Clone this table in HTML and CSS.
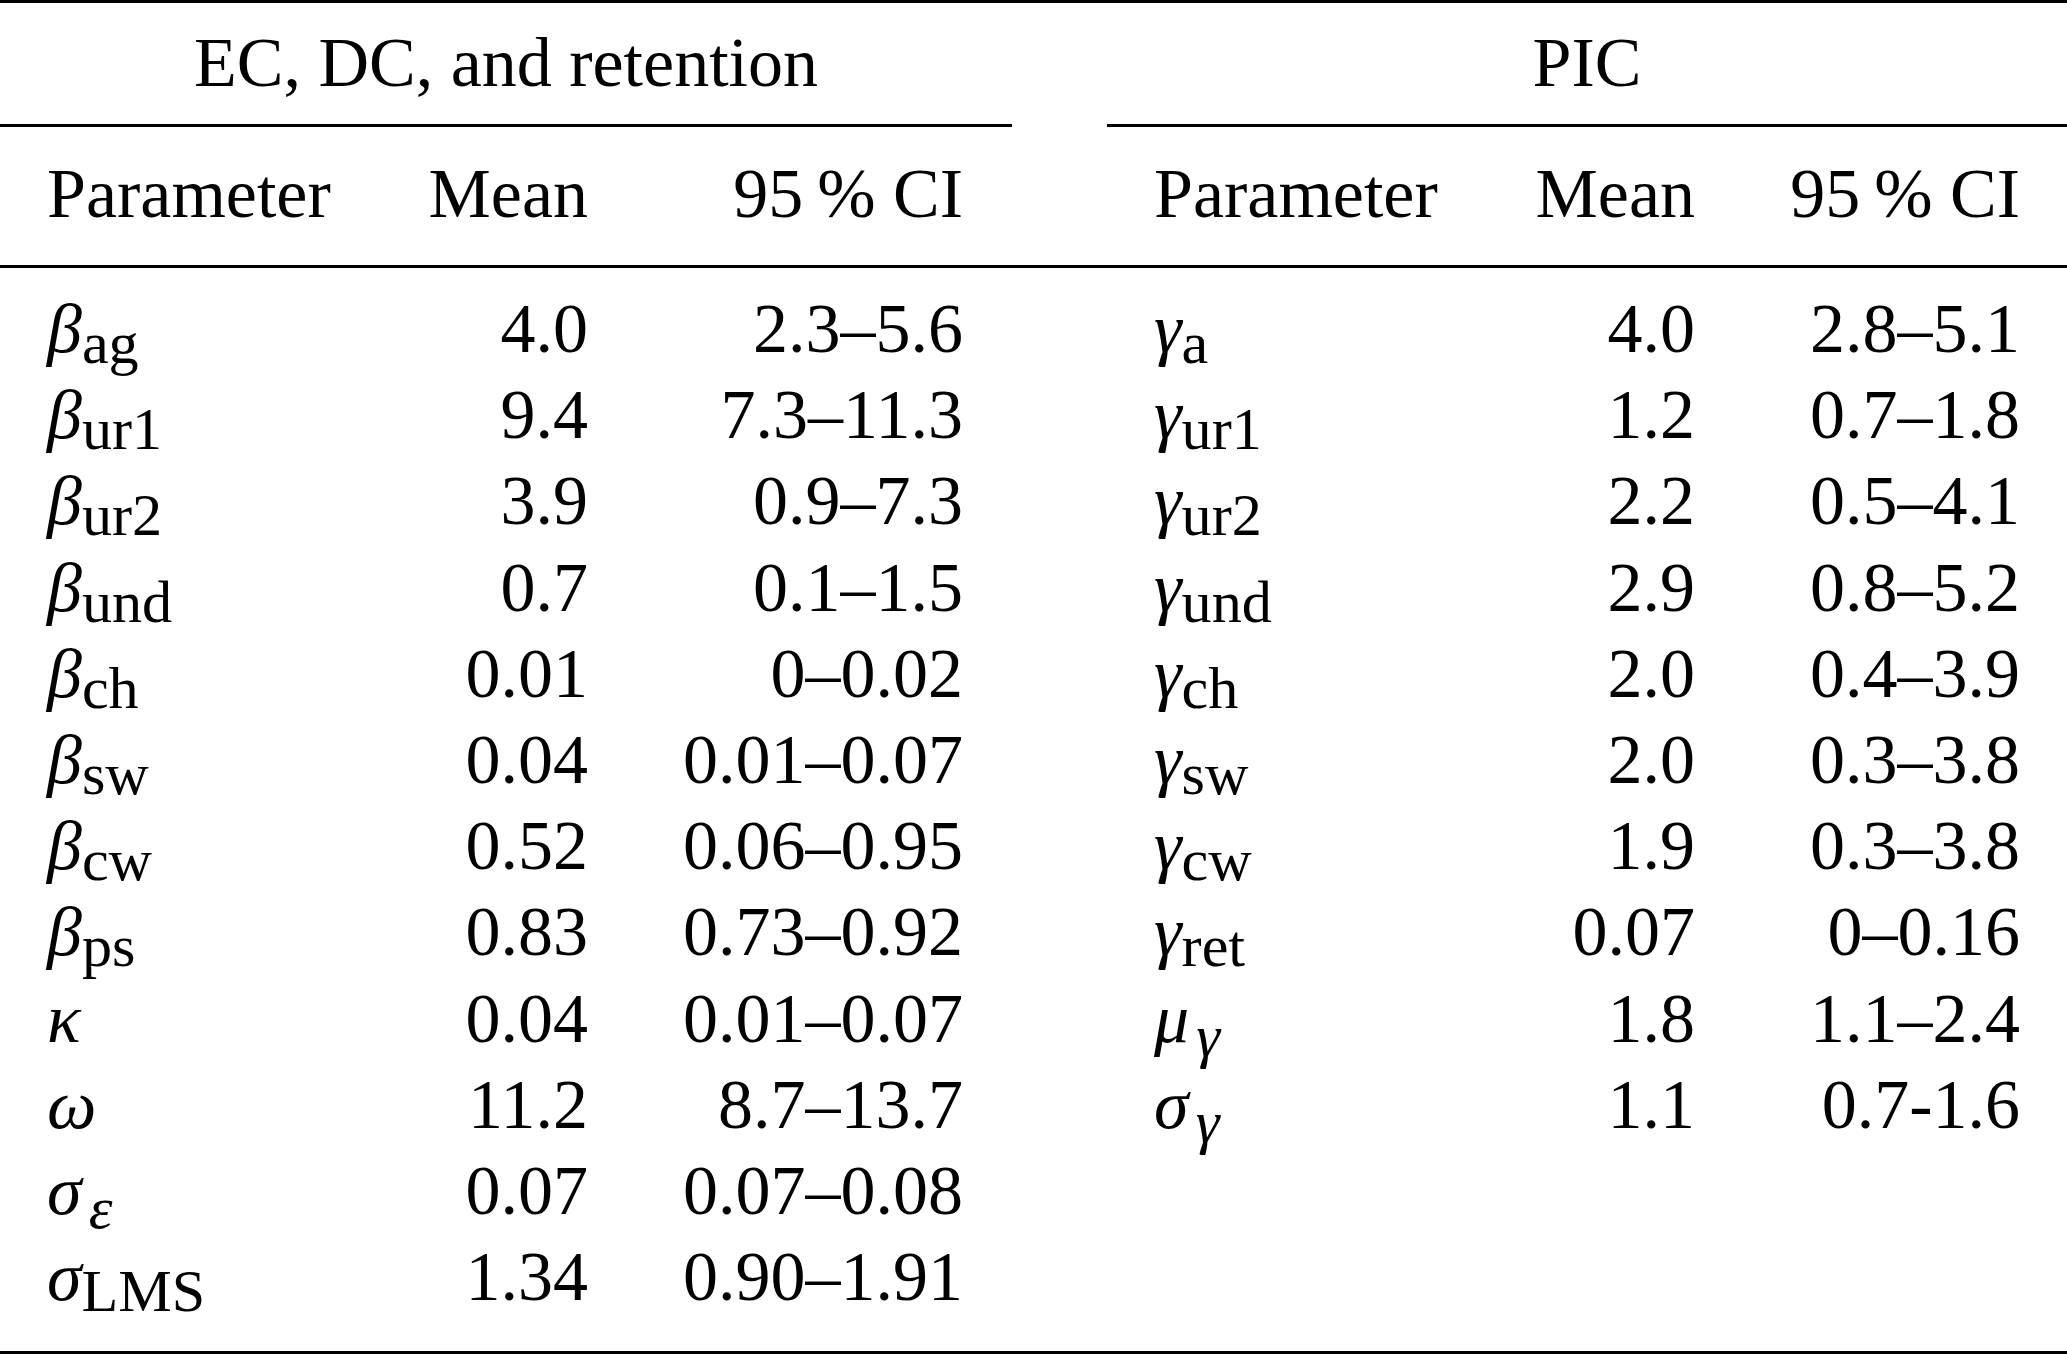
FILE: index.html
```html
<!DOCTYPE html>
<html lang="en">
<head>
<meta charset="utf-8">
<title>Parameter estimates</title>
<link rel="stylesheet" href="styles.css">
</head>
<body>
<div class="tbl">
  <div class="band titles">
    <div class="gtitle gl">EC, DC, and retention</div>
    <div class="gtitle gr">PIC</div>
  </div>
  <div class="band heads">
    <div class="grp gl">
      <div class="par">Parameter</div><div class="num">Mean</div><div class="num">95&#8201;% CI</div>
    </div>
    <div class="grp gr">
      <div class="par">Parameter</div><div class="num">Mean</div><div class="num">95&#8201;% CI</div>
    </div>
  </div>
  <div class="band rows">
    <div class="grp gl">
      <div class="par"><i class="g">β</i><span class="s">ag</span></div><div class="num">4.0</div><div class="num">2.3–5.6</div>
      <div class="par"><i class="g">β</i><span class="s">ur1</span></div><div class="num">9.4</div><div class="num">7.3–11.3</div>
      <div class="par"><i class="g">β</i><span class="s">ur2</span></div><div class="num">3.9</div><div class="num">0.9–7.3</div>
      <div class="par"><i class="g">β</i><span class="s">und</span></div><div class="num">0.7</div><div class="num">0.1–1.5</div>
      <div class="par"><i class="g">β</i><span class="s">ch</span></div><div class="num">0.01</div><div class="num">0–0.02</div>
      <div class="par"><i class="g">β</i><span class="s">sw</span></div><div class="num">0.04</div><div class="num">0.01–0.07</div>
      <div class="par"><i class="g">β</i><span class="s">cw</span></div><div class="num">0.52</div><div class="num">0.06–0.95</div>
      <div class="par"><i class="g">β</i><span class="s">ps</span></div><div class="num">0.83</div><div class="num">0.73–0.92</div>
      <div class="par"><i class="g">κ</i></div><div class="num">0.04</div><div class="num">0.01–0.07</div>
      <div class="par"><i class="g">ω</i></div><div class="num">11.2</div><div class="num">8.7–13.7</div>
      <div class="par"><i class="g">σ</i><i class="s si">ε</i></div><div class="num">0.07</div><div class="num">0.07–0.08</div>
      <div class="par"><i class="g">σ</i><span class="s">LMS</span></div><div class="num">1.34</div><div class="num">0.90–1.91</div>
    </div>
    <div class="grp gr">
      <div class="par"><i class="g">γ</i><span class="s">a</span></div><div class="num">4.0</div><div class="num">2.8–5.1</div>
      <div class="par"><i class="g">γ</i><span class="s">ur1</span></div><div class="num">1.2</div><div class="num">0.7–1.8</div>
      <div class="par"><i class="g">γ</i><span class="s">ur2</span></div><div class="num">2.2</div><div class="num">0.5–4.1</div>
      <div class="par"><i class="g">γ</i><span class="s">und</span></div><div class="num">2.9</div><div class="num">0.8–5.2</div>
      <div class="par"><i class="g">γ</i><span class="s">ch</span></div><div class="num">2.0</div><div class="num">0.4–3.9</div>
      <div class="par"><i class="g">γ</i><span class="s">sw</span></div><div class="num">2.0</div><div class="num">0.3–3.8</div>
      <div class="par"><i class="g">γ</i><span class="s">cw</span></div><div class="num">1.9</div><div class="num">0.3–3.8</div>
      <div class="par"><i class="g">γ</i><span class="s">ret</span></div><div class="num">0.07</div><div class="num">0–0.16</div>
      <div class="par"><i class="g">μ</i><i class="s si">γ</i></div><div class="num">1.8</div><div class="num">1.1–2.4</div>
      <div class="par"><i class="g">σ</i><i class="s si">γ</i></div><div class="num">1.1</div><div class="num">0.7-1.6</div>
    </div>
  </div>
</div>
</body>
</html>
```
FILE: styles.css
```css
html, body {
  margin: 0;
  padding: 0;
  background: #fff;
}

body {
  width: 2067px;
  color: #000;
  font-family: "Liberation Serif", "Times New Roman", serif;
  font-size: 70px;
}

.tbl {
  border-top: 3px solid #000;
  border-bottom: 3px solid #000;
}

.band {
  display: flex;
  gap: 95px;
  align-items: flex-start;
}

.gl { width: 1012px; }
.gr { width: 960px; }

.gtitle {
  text-align: center;
  line-height: 119px;
  padding-bottom: 2px;
  border-bottom: 3px solid #000;
  white-space: nowrap;
}

.heads {
  border-bottom: 3px solid #000;
}

.grp {
  display: grid;
  box-sizing: border-box;
  padding-left: 47px;
  white-space: nowrap;
}

.grp.gl { grid-template-columns: 381px 160px 375px; }
.grp.gr { grid-template-columns: 381px 160px 325px; }

.heads .grp {
  line-height: 134px;
  padding-bottom: 4px;
}

.rows {
  padding-top: 18px;
  padding-bottom: 31px;
}

.rows .grp {
  line-height: 86.2px;
}

.num { text-align: right; }

.g {
  font-style: italic;
}

.s {
  font-size: 0.86em;
  font-style: normal;
  line-height: 0;
  vertical-align: -0.18em;
}

.s.si {
  font-style: italic;
  margin-left: 0.12em;
  vertical-align: -0.24em;
}
```
